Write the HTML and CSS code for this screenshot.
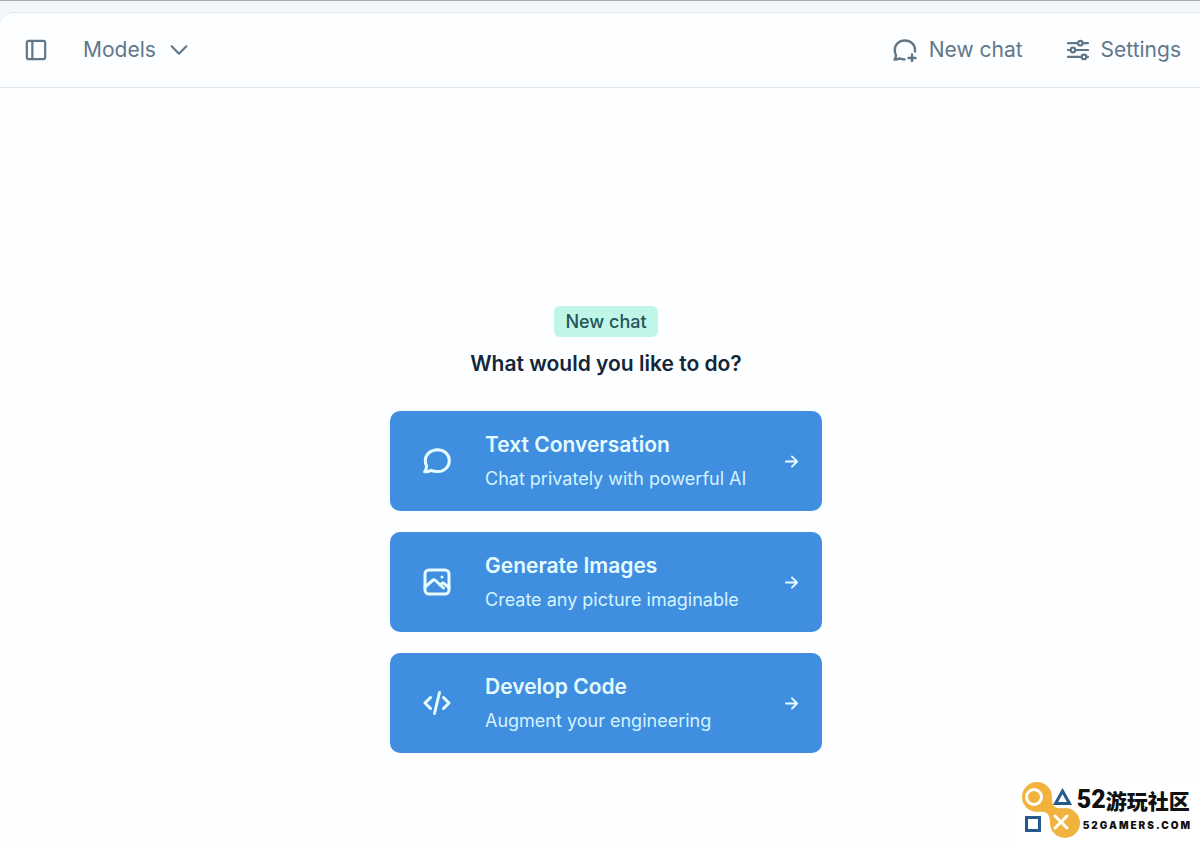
FILE: index.html
```html
<!doctype html>
<html lang="en">
    <head>
        <meta charset="UTF-8" />
        <meta name="viewport" content="width=device-width, initial-scale=1.0" />
        <title>New chat</title>
        <link rel="stylesheet" href="styles.css">
    </head>
    <body>
        <div class="panel">
            <header class="topbar">
                <button class="bar-button" aria-label="Toggle sidebar">
                    <svg class="icon" viewBox="0 0 24 24">
                        <rect x="2" y="2" width="20" height="20" rx="2" />
                        <path d="M8 2v20" />
                    </svg>
                </button>
                <button class="bar-button models">
                    Models
                    <svg class="icon" viewBox="0 0 24 24">
                        <path d="M4 8l8 8 8-8" />
                    </svg>
                </button>
                <div class="actions">
                    <button class="bar-button">
                        <svg class="icon icon-chat" viewBox="0 0 24 24">
                            <path d="M11.500 21.500c-2-.1-3.500-.5-5-1.100-1.500.8-3.100 1.100-5 1.100.9-1.200 1.400-2.700 1.500-4.300-.8-1.500-1.200-3.200-1.200-5C1.800 6.400 6 2.500 11.800 2.500S22 6.400 22 12v1.500" />
                            <path d="M19 16.500v7M15.500 20h7" />
                        </svg>
                        New chat
                    </button>
                    <button class="bar-button">
                        <svg class="icon" viewBox="0 0 24 24">
                            <path d="M1 4.500h11M17 4.500h6M1 12h3M9 12h14M1 19.500h15M21 19.500h2" />
                            <circle cx="14.500" cy="4.500" r="2.500" />
                            <circle cx="6.500" cy="12" r="2.500" />
                            <circle cx="18.500" cy="19.500" r="2.500" />
                        </svg>
                        Settings
                    </button>
                </div>
            </header>

            <main class="start">
                <span class="badge">New chat</span>
                <h1>What would you like to do?</h1>

                <div class="cards">
                    <button class="card">
                        <svg class="card-icon" viewBox="0 0 28 28">
                            <path d="M14.500 2.800c6.800 0 11.800 4.700 11.800 10.900S21.300 24.600 14.500 24.600c-2.400 0-4.500-.4-6.300-1.300-1.900 1-4 1.500-6.600 1.500 1.100-1.600 1.900-3.500 2-5.600C2.700 17.400 2.300 15.600 2.300 13.700 2.300 7.500 7.500 2.800 14.500 2.800z" />
                        </svg>
                        <span class="card-text">
                            <span class="card-title">Text Conversation</span>
                            <span class="card-info">Chat privately with powerful AI</span>
                        </span>
                        <svg class="arrow" viewBox="0 0 14 14">
                            <path d="M1 7h12M7.500 1.500L13 7l-5.500 5.500" />
                        </svg>
                    </button>
                    <button class="card">
                        <svg class="card-icon" viewBox="0 0 28 28">
                            <rect x="2" y="2" width="24" height="24" rx="4" />
                            <path d="M2 19l7.500-6.500c1-.9 2-.9 3 0L20.500 20M17 17l1.500-1.200c1-.9 2-.9 3 0L26 19.500" />
                            <path d="M19 9h.01" />
                        </svg>
                        <span class="card-text">
                            <span class="card-title">Generate Images</span>
                            <span class="card-info">Create any picture imaginable</span>
                        </span>
                        <svg class="arrow" viewBox="0 0 14 14">
                            <path d="M1 7h12M7.500 1.500L13 7l-5.500 5.500" />
                        </svg>
                    </button>
                    <button class="card">
                        <svg class="card-icon" viewBox="0 0 28 28">
                            <path d="M7.500 8.500L2 14l5.500 5.500M20.500 8.500L26 14l-5.500 5.500M16.500 3.500l-5 21" />
                        </svg>
                        <span class="card-text">
                            <span class="card-title">Develop Code</span>
                            <span class="card-info">Augment your engineering</span>
                        </span>
                        <svg class="arrow" viewBox="0 0 14 14">
                            <path d="M1 7h12M7.500 1.500L13 7l-5.500 5.500" />
                        </svg>
                    </button>
                </div>
            </main>
        </div>

        <div class="community">
            <svg class="community-logo" viewBox="0 0 58 58">
                <circle class="blob" cx="15" cy="16" r="15" />
                <circle class="blob" cx="43" cy="42" r="15" />
                <path class="blob" d="M30 17c0 7 2 11 10 10L28 42c0-7-2-12-10-11z" />
                <circle class="white-line" cx="12" cy="16" r="7.500" />
                <path class="white-line" d="M33 35l12 12M45 35L33 47" />
                <path class="blue-line" d="M40.500 10l7 12.500h-14z" />
                <rect class="blue-line" x="4.500" y="36.500" width="13" height="13" />
            </svg>
            <div class="community-text">
                <div class="community-name"><b>52</b><span lang="zh-CN">游玩社区</span></div>
                <div class="community-site">52GAMERS.COM</div>
            </div>
        </div>
    </body>
</html>
```
FILE: styles.css
```css
* {
    box-sizing: border-box;
}
body {
    margin: 0;
    min-height: 100vh;
    display: flex;
    flex-direction: column;
    padding-top: 11px;
    border-top: 1px solid #a6a9ad;
    background-color: #f4f7fa;
    font-family: Inter, "Liberation Sans", sans-serif;
    color: #13263a;
}
button {
    border: none;
    font-family: inherit;
    cursor: pointer;
}
svg {
    flex: none;
    fill: none;
    stroke: currentColor;
    stroke-width: 2;
    stroke-linecap: round;
    stroke-linejoin: round;
}
.panel {
    flex: 1;
    border-top: 1px solid #e2e7ec;
    border-top-left-radius: 14px;
    background-color: #fcfeff;
}

/* Top bar */
.topbar {
    display: flex;
    align-items: center;
    height: 75px;
    padding: 0 19px 0 25px;
    border-bottom: 1px solid #e0e5ea;
}
.bar-button {
    display: flex;
    align-items: center;
    gap: 12px;
    padding: 0;
    background: none;
    color: #60778a;
    font-size: 21px;
    line-height: 28px;
}
.icon {
    width: 22px;
    height: 22px;
    stroke-width: 2.4;
}
.icon-chat {
    width: 24px;
    height: 24px;
}
.models {
    margin-left: 36px;
}
.actions {
    display: flex;
    gap: 44px;
    margin-left: auto;
}

/* Start screen */
.start {
    display: flex;
    flex-direction: column;
    align-items: center;
    padding: 218px 0 48px 12px;
}
.badge {
    padding: 2px 11px;
    border-radius: 6px;
    background-color: #c0f6e7;
    color: #24545a;
    font-size: 18px;
    font-weight: 500;
    line-height: 27px;
}
h1 {
    margin: 12px 0 33px;
    font-size: 21px;
    font-weight: 600;
    line-height: 29px;
}
.cards {
    display: flex;
    flex-direction: column;
    gap: 21px;
    width: 100%;
    max-width: 432px;
}
.card {
    display: flex;
    align-items: center;
    gap: 34px;
    padding: 17px 24px 15px 33px;
    border-radius: 10px;
    background-color: #408ee0;
    color: #e6fcff;
    text-align: left;
}
.card-icon {
    width: 28px;
    height: 28px;
    stroke-width: 3;
}
.card-text {
    flex: 1;
    display: flex;
    flex-direction: column;
}
.card-title {
    font-size: 21px;
    font-weight: 600;
    line-height: 34px;
}
.card-info {
    color: #d3f4ff;
    font-size: 18px;
    line-height: 34px;
}
.card-icon,
.arrow {
    margin-bottom: 2px;
}
.arrow {
    width: 13px;
    height: 13px;
}

/* Community mark in the corner */
.community {
    position: absolute;
    right: 0;
    bottom: 0;
    display: flex;
    align-items: center;
    padding: 4px 8px 4px 13px;
    background-color: #fff;
    color: #111;
}
.community-logo {
    width: 58px;
    height: 58px;
}
.community-text {
    margin-left: -3px;
}
.blob {
    fill: #f2b23e;
    stroke: none;
}
.white-line {
    stroke: #fff;
    stroke-width: 3;
}
.blue-line {
    stroke: #265a8c;
    stroke-width: 3;
    stroke-linejoin: miter;
}
.community-name {
    display: flex;
    align-items: center;
    font-family: "Noto Sans CJK SC", sans-serif;
    font-size: 21px;
    font-weight: 900;
    line-height: 30px;
}
.community-name b {
    font-family: Roboto, "Liberation Sans", sans-serif;
    font-size: 25px;
}
.community-site {
    padding-left: 6px;
    font-size: 10px;
    font-weight: 900;
    line-height: 20px;
    letter-spacing: 2px;
}
```
